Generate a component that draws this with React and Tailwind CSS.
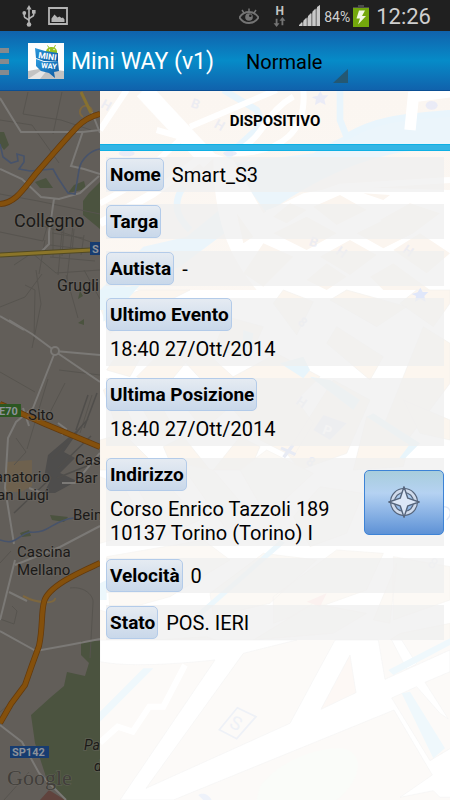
import { useState } from "react";

const fields = [
  { id: 1, label: "Nome", value: "Smart_S3" },
  { id: 2, label: "Targa", value: "" },
  { id: 3, label: "Autista", value: "-" },
  { id: 4, label: "Ultimo Evento", value: "18:40 27/Ott/2014", stacked: true },
  { id: 5, label: "Ultima Posizione", value: "18:40 27/Ott/2014", stacked: true },
  { id: 6, label: "Indirizzo", value: "Corso Enrico Tazzoli 189\n10137 Torino (Torino) I", stacked: true, locate: true },
  { id: 7, label: "Velocità", value: "0" },
  { id: 8, label: "Stato", value: "POS. IERI" },
];

const UsbIcon = () => (
  <svg className="w-[14px] h-[22px]" viewBox="0 0 14 22" fill="none" stroke="#b4b4b4" strokeWidth="1.6">
    <path d="M7 3v16M2.3 8v3.5c0 2 4.7 2.2 4.7 4.5M11.7 7v3c0 2-4.7 2.2-4.7 4.5" />
    <path d="M7 0l2.6 4.4H4.4z" fill="#b4b4b4" stroke="none" />
    <circle cx="7" cy="19.5" r="2.3" fill="#b4b4b4" stroke="none" />
    <circle cx="2.3" cy="8" r="1.9" fill="#b4b4b4" stroke="none" />
    <path d="M10 5h3.6v3.6H10z" fill="#b4b4b4" stroke="none" />
  </svg>
);

const PictureIcon = () => (
  <svg className="w-[20px] h-[18px]" viewBox="0 0 20 18">
    <path d="M1 1h18v16H1z" fill="none" stroke="#b4b4b4" strokeWidth="1.8" />
    <path d="M3.500 15v-3.500l3-4 3 3 2-1 2 1.500 1.500-.5 1.500 2V15z" fill="#b4b4b4" />
  </svg>
);

const EyeIcon = () => (
  <svg className="w-[20px] h-[16px]" viewBox="0 0 20 16" fill="none" stroke="#747474" strokeWidth="1.8">
    <path d="M.5 9.500C3 5.500 6.500 4 10 4s7 1.500 9.500 5.500C17 13.500 13.500 15 10 15S3 13.500.5 9.500z" />
    <path d="M10 4V.5M5 5L3 2M15 5l2-3" strokeWidth="1.500" />
    <circle cx="10" cy="9" r="3.800" fill="#747474" stroke="none" />
    <circle cx="11.300" cy="7.800" r="1.300" fill="#202020" stroke="none" />
  </svg>
);

const DataIcon = () => (
  <div className="flex w-[13px] flex-col items-center">
    <span className="text-[12px] leading-[12px] font-bold text-[#c4c4c4]">H</span>
    <svg className="w-[13px] h-[10px]" viewBox="0 0 13 11" fill="#747474">
      <path d="M2.300 2h2v5h2.200l-3.200 4L0 7h2.300zM8.700 9h2V4H13L9.700 0 6.500 4h2.200z" />
    </svg>
  </div>
);

const SignalIcon = () => (
  <svg className="w-[21px] h-[21px]" viewBox="0 0 21 21" fill="#c9c9c9">
    <path d="M0 21v-1l3-3v4zM4.500 21v-5.500l3-3V21zM9 21V11l3-3v13zM13.500 21V6.500l3-3V21zM18 21V2l3-2v21z" />
    <path d="M0 21L21 0v21z" fillOpacity=".6" />
  </svg>
);

const BatteryIcon = () => (
  <svg className="w-[16px] h-[22px]" viewBox="0 0 16 22">
    <path d="M5 0h6v2h5v2H0V2h5z" fill="#4b4b4b" />
    <path d="M0 3h16v19H0z" fill="#74a80c" />
    <path d="M6 5.500h6L9 11h4l-8 8.500 2-6H3.500z" fill="#f1f6e4" />
  </svg>
);

const StatusBar = () => (
  <header className="flex h-[31px] items-center bg-[#202020] pl-[22px] pr-[19px]">
    <UsbIcon />
    <div className="ml-[12px]">
      <PictureIcon />
    </div>
    <div className="ml-auto flex items-center">
      <EyeIcon />
      <div className="ml-[14px]">
        <DataIcon />
      </div>
      <div className="ml-[13px]">
        <SignalIcon />
      </div>
      <span className="ml-[4px] pt-[3px] text-[14px] text-[#d0d0d0]">84%</span>
      <div className="ml-[3px]">
        <BatteryIcon />
      </div>
      <span className="ml-[7px] pt-[3px] text-[22px] leading-[28px] text-[#cfcfcf]">12:26</span>
    </div>
  </header>
);

const AppLogo = () => (
  <svg className="w-[36px] h-[36px]" viewBox="0 0 36 36">
    <defs>
      <linearGradient id="bubble" x1="0" y1="0" x2="1" y2="1">
        <stop offset="0" stopColor="#2b9ade" />
        <stop offset="1" stopColor="#0a569e" />
      </linearGradient>
    </defs>
    <path d="M0 0h36v36H0z" fill="#fdfdfd" />
    <path d="M0 28l16-3 20 3v8H0z" fill="#c3c3c3" />
    <path d="M0 36l14-9 6-1-8 10z" fill="#e6e6e6" />
    <path d="M18 9c0-6 10-7 11-1v4H18z" fill="#95c11f" />
    <path d="M19.500 2.500l2 3M27.500 2l-1.500 3" stroke="#95c11f" />
    <circle cx="21.500" cy="7" r=".7" fill="#fff" />
    <circle cx="26" cy="6.500" r=".7" fill="#fff" />
    <path d="M7 5l10 3 13 2v8l-14 0-8-3z" fill="url(#bubble)" />
    <path d="M8 16l8 3 14-1 1 10-5 1 1 6-6-5-8-2-5-5z" fill="url(#bubble)" />
    <text x="10" y="15" transform="rotate(8 10 15)" fontSize="8.500" fontWeight="700" fill="#fff">MINI</text>
    <text x="13" y="25" transform="rotate(4 13 25)" fontSize="7.500" fontWeight="700" fill="#fff">WAY</text>
  </svg>
);

const ActionBar = () => {
  const [mode, setMode] = useState("Normale");

  return (
    <div className="flex h-[60px] items-center border-b border-[#0a4f94] bg-linear-to-b from-[#1062ac] via-[#068bc8] to-[#1062ac]">
      <button aria-label="Menu" className="flex w-[9px] flex-col gap-[6px] pt-[2px]">
        <span className="h-[5px] w-full bg-[#868a8e]" />
        <span className="h-[5px] w-full bg-[#868a8e]" />
        <span className="h-[5px] w-full bg-[#868a8e]" />
      </button>
      <div className="ml-[19px]">
        <AppLogo />
      </div>
      <h1 className="ml-[7px] pt-[4px] text-[23px] text-white">Mini WAY (v1)</h1>
      <div className="relative ml-[24px] h-[44px] w-[110px]">
        <select
          aria-label="Tipo mappa"
          value={mode}
          onChange={(e) => setMode(e.target.value)}
          className="h-full w-full appearance-none bg-transparent pt-[3px] pl-[8px] text-[20px] text-black outline-none"
        >
          <option>Normale</option>
          <option>Satellite</option>
        </select>
        <svg className="pointer-events-none absolute right-0 bottom-0 w-[15px] h-[14px]" viewBox="0 0 15 14">
          <path d="M15 0v14H0z" fill="#245873" />
        </svg>
      </div>
    </div>
  );
};

// city map under the drawer, dimmed
const StreetMap = () => (
  <svg className="absolute inset-0 h-full w-full" viewBox="0 91 100 709" preserveAspectRatio="xMinYMin slice" fill="none">
    <path d="M0 91h100v709H0z" fill="#625e59" />
    {/* parks */}
    <g fill="#4b533f">
      <path d="M83 201l6-8 11-11v47l-17-14zM0 132l4 0 5 13-5 5-4-5zM35 182l11-4 7 10-13 0zM74 185l10-4 2 8-18 4zM80 291l3 5-5 3zM78 323l6-4v6z" />
      <path d="M81 641l19 0v159H64l-17-20-12-37-4-28 20-18 13-11 3-14 18 4 4-13-8-8z" />
      <path d="M50 515l18 2-4 5-12-2zM20 533l9-3 2 6-9 1z" />
    </g>
    <path d="M6 462l26-2v26l-11 6H5z" fill="#6e614e" />
    <path d="M48 455l34-29-18 26 11 6-15 15 17 8-22 12H44l6-12-6-3z" fill="#4e4d4c" />
    <path d="M40 800l9-10 16 10z" fill="#60433d" />
    {/* small streets */}
    <g stroke="#57544f">
      <path d="M0 120l32 5 27 38M28 92l-5 22 38 6 30 10M62 92l-9 42M0 194l38 7 62 13M0 232l43 9 10-35M34 223l66 22M14 265l18-12 24 20 44-3M36 270l5 34-9 44M0 307l25-10 17-23M25 285l10 5-1 50M0 372l35 20M48 379l-21 70M65 383l-22 43M92 395l-12 38M45 240l-6 34M63 221l-5 54M73 225l-6 54M52 233l31 5M50 245l40 5M50 257l45 4" />
      <path d="M0 563l11-12M12 606l5 5-3 13-14-5M70 588c15-2 24 8 23 15l-3 55M0 712l14-12M29 772l-25 28M66 275l12 43M84 270l16 29M59 370l41 5M16 438l10 14-12 13" />
      <path d="M52 459l36-40M58 468l33-32M57 478l30-12M76 430l12-35M84 428l13-35M14 513l38-36" stroke="#504e4b" strokeWidth="1.500" />
      <path d="M53 224v33M64 226l-2 30M74 229l-2 24M84 235l-3 20" />
    </g>
    {/* secondary roads */}
    <g stroke="#7b7976" strokeWidth="2">
      <path d="M0 98l11 18 10 16 62 0 17-2M83 131l-12 35 13 3 16 5M0 169l22 10 19 18 18 2 21-6 19-17M54 199l-5 33v12l-8 8M91 110l9 23M0 316l24 14" />
      <path d="M9 320l23 14 23 17 45 4M56 352l44 30M55 352l-22 56-17 14-8 16-3 50 9 56M23 408l6 18M58 423l8 6-4 6M62 483h13l25-30M42 493l-13-5" />
      <path d="M100 526L60 547 15 565M15 560l-15 60M9 592l18 9M0 631l36 20 33-6 31-6M0 725l22 17 17 31 27 27" />
      <circle cx="55" cy="351" r="4" fill="#625e59" />
    </g>
    <path d="M0 144l3 13 8 6 7-2-1-7 7 2 0 6-5 7 11 2 23-2 5 9 10 15 7 1 4-24c2-12 13-20 21-21M0 540c17 6 17-5 30-8 20 2 22-12 44-14" stroke="#47536b" strokeWidth="1.600" />
    <path d="M23 596c15 8 33 8 32 2M83 117a6 6 0 1 1 9-5" stroke="#7d673f" strokeWidth="2" />
    <path d="M81 92l10 21" stroke="#877130" strokeWidth="3" />
    <path d="M0 255l91-5" stroke="#514923" strokeWidth="5" />
    <path d="M0 255l91-5" stroke="#8b7529" strokeWidth="3" />
    <g stroke="#643a0c" strokeWidth="6">
      <path d="M0 204c17-1 25-18 39-34s25-29 38-43c8-8 15-11 23-13" />
      <path d="M0 404l45 20 55 23" />
      <path d="M0 723l11-19 14-19 7-20 7-19c4-19 2-33 5-44 4-17 41-32 56-39" />
    </g>
    <g stroke="#84500c" strokeWidth="4.500">
      <path d="M0 204c17-1 25-18 39-34s25-29 38-43c8-8 15-11 23-13" />
      <path d="M0 404l45 20 55 23" />
      <path d="M0 723l11-19 14-19 7-20 7-19c4-19 2-33 5-44 4-17 41-32 56-39" />
    </g>
    <path d="M90 242h10v13H90z" fill="#173c70" />
    <path d="M0 404h21v13H0z" fill="#2c5722" />
    <path d="M10 746h39v12H10z" fill="#173c70" />
    <g fontSize="11" fontWeight="700" fill="#8d9299">
      <text x="92" y="253">S</text>
      <text x="-1" y="415">E70</text>
      <text x="12" y="756">SP142</text>
    </g>
    <g fill="#1b1a18" stroke="#716d67" strokeWidth="2" paintOrder="stroke" strokeOpacity=".4">
      <text x="14" y="227" fontSize="18">Collegno</text>
      <g fontSize="15">
        <text x="57" y="291" fontSize="16">Grugli</text>
        <text x="28" y="420">Sito</text>
        <text x="50" y="482" textAnchor="end">anatorio</text>
        <text x="49" y="500" textAnchor="end">an Luigi</text>
        <text x="75" y="465">Cas</text>
        <text x="75" y="483">Bar</text>
        <text x="73" y="520">Bein</text>
        <text x="17" y="557">Cascina</text>
        <text x="17" y="575">Mellano</text>
        <text x="84" y="750" fontSize="14" fontStyle="italic">Pa</text>
        <text x="94" y="771" fontSize="14" fontStyle="italic">d</text>
      </g>
    </g>
    <text x="7" y="785" fontSize="22" fontFamily="Liberation Serif, serif" fill="#423f3b" stroke="#77736d" strokeOpacity=".5" strokeWidth="1" paintOrder="stroke">Google</text>
  </svg>
);

// faint street pattern behind the device details
const DrawerPattern = () => (
  <svg className="absolute inset-0 h-full w-full" viewBox="100 91 350 709" preserveAspectRatio="xMinYMin slice" fill="none">
    <defs>
      <linearGradient id="paper" x1="0" y1="0" x2="0" y2="1">
        <stop offset="0" stopColor="#fbf6f1" />
        <stop offset=".6" stopColor="#fdf9f5" />
        <stop offset="1" stopColor="#fcfcfa" />
      </linearGradient>
    </defs>
    <path d="M100 91h350v709H100z" fill="url(#paper)" />
    <g transform="translate(100 90) scale(.33333)">
      <path d="M390 220L640 190C760 110 900 80 1050 60v110C850 180 700 230 500 370zM0 600L130 470l130-30 110-90 30 60-160 120-190 70z" fill="#ebf5fb" />
      <path d="M720 0v90l20 50c100-60 200-60 310-70M370 0l100 60 20 40-110 100M250 290c-40 60-10 100 20 130" stroke="#e9f5fc" strokeWidth="20" />
      <g stroke="#fff" strokeWidth="18">
        <path d="M0 120L80 0M270 110L530 0M610 0c10 120-60 190-210 190M400 190c100-50 90-120 180-170M250 140L90 290 0 340M240 140l-70-20" />
        <path d="M500 370L720 290 1050 270M470 480L760 310 1050 380" />
      </g>
      <path d="M930 120l10-100 110-15" stroke="#fff" strokeWidth="34" />
      <path d="M130 0l200 215" stroke="#fff" strokeWidth="54" />
      <path d="M0 400l160-90 160-120" stroke="#fff" strokeWidth="24" />
      <path d="M340 190l60 20 90 160 120-60 110-20 330 10v300H470C390 500 340 400 340 190z" fill="#fff" />
      <g fill="#fbf5ef">
        <path d="M410 370l50 70-30 20zM520 380l50-40 50 20-60 40zM640 350l80-35 80 45-90 45zM840 390l90-50 90 30-80 60zM520 430l100-50 90 50-90 50zM770 430l80-40 90 40-90 45zM660 500l90-50 80 45-80 60zM880 480l80-50 90 60-70 60zM430 550l60-90 90 40-90 90zM620 570l60-50 60 40-60 40zM810 560l70-40 110 80H850zM790 310l80 5-20 15z" />
      </g>
      <g fill="#e6e9f7" fillOpacity=".8">
        <path d="M635 22l18-5 8-14 7 13 17 0-12 12 4 17-16-8-16 8 3-17z" />
        <ellipse cx="995" cy="46" rx="18" ry="13" />
        <ellipse cx="80" cy="190" rx="24" ry="9" />
        <ellipse cx="390" cy="190" rx="20" ry="8" />
      </g>
      <g fontSize="40" fontWeight="700" fill="#e3e6f3" fillOpacity=".6">
        <text transform="translate(270 50) rotate(20)">B</text>
        <text transform="translate(340 110) rotate(30)">H</text>
        <text transform="translate(625 465) rotate(20)">B</text>
        <text transform="translate(705 490) rotate(35)">H</text>
        <text transform="translate(905 485) rotate(35)">H</text>
        <text transform="translate(0 50) rotate(30)">H</text>
      </g>
    </g>
    <g transform="translate(100 290) scale(.33333)">
      <path d="M0 0h1050v1050H0z" fill="#fff" />
      <g fill="#fcf6ef" stroke="#f3f1ef" strokeWidth="2">
        <path d="M0 50l120-50h150l-80 40-160 90zM380 80l110 30-40 90-110-20zM520 40l30-40 90 35-50 100zM680 160l30-50 140 90-40 70zM690 30l50-30 180 50-90 60zM900 40l50-40h100v40l-50 70zM970 110l80 50v120l-120 160-80-30zM20 240l60-90 60 20-50 90zM110 260l110-110 60 40-90 110zM240 200l60-30 110 100-50 60z" />
        <path d="M10 300l30-20 70 140-50 20zM90 290l50-20 90 160-50 20zM240 330l80-50 60 80-70 60zM400 260l130-70 130 70-70 70 50 70-60 100-100-50-80-90zM700 270l110 60-70 160-140 50-40-50zM800 380l130 70-20 80-150 10zM0 450l70-20 110 110H0zM420 440l60 30-30 70H340zM910 330l140 60v60l-90-20zM190 470l60-30 80 100H220z" />
      </g>
      <path d="M10 0l110-15-70 80-40 30zM430 120l30 10-10 80-25-10zM540 220l70-20 20 40-20 25zM630 260l60 10 90 60-20 30zM800 380l20-10 140 90-50 50-12-5 30-40zM0 0h15v60H0z" fill="#e8f5fb" />
      <path d="M935 12l18-5 8-14 7 13 17 0-12 12 4 17-16-8-16 8 3-17z" fill="#e0e7fa" />
      <g fill="#e8ebf4" fontSize="40" fontWeight="700">
        <path d="M670 375l70 25-50 50-50-30z" />
        <text transform="translate(665 430) rotate(20)" fill="#fff">P</text>
        <path d="M545 470l18 8 12-16 8 6-10 14 16 8-5 8-17-8-12 15-8-6 10-14-16-7z" />
        <text transform="translate(590 100) rotate(40)">8</text>
        <text transform="translate(585 340) rotate(35)">H</text>
        <text transform="translate(615 520) rotate(35)">8</text>
      </g>
    </g>
    <g transform="translate(100 450) scale(.33333)">
      <path d="M0 70h1050v530H0z" fill="#fff" />
      <g fill="#fcf9f5" stroke="#f6f4f2" strokeWidth="2">
        <path d="M0 80l70 30 60 100-60 50-70 20zM90 70l90 10 120 130-110 50zM240 40l100 20 110 130-70 50zM420 60l80-60 140 70-140 130zM580 200l80-90 130 20-50 120-110 40zM20 320l290-50 80 60-180 110-180 50zM330 430l160-120 160 20-140 130-170 40zM520 440l190-140 140 10-50 110-280 100zM880 320l170 30v100l-170 60zM0 480l60 20 100 70 160-10 110 40H0zM820 510l70-170-20 180z" />
        <path d="M460 570l180-110 160 30-100 60zM840 590l60-40 150-30v80z" />
      </g>
      <path d="M290 490l150-130 100-90 15 8-250 220zM0 400l20-10v60H0z" fill="#ecf7fc" />
      <path d="M620 455l60-25-20 40z" fill="#fbf1ef" />
      <text transform="translate(980 345) rotate(35)" fontSize="44" fill="#eff1f7">8</text>
      <path d="M1030 170c20 0 30 20 10 40" stroke="#e5e9f5" strokeWidth="4" />
    </g>
    <g transform="translate(100 640) scale(.33333)">
      <path d="M0 0h1050v480H0z" fill="#fcfaf8" />
      <path d="M480 440c40-60 150-120 250-115 70 20 50 100-20 155H470z" fill="#fafcf9" />
      <g stroke="#f4f4f5" strokeWidth="2" fill="#fff">
        <path d="M0 0h590L430 40 138 445 570 250 705 0h130l20 118L1050 30v65L975 127l70 110-25-17-70-80-75 34 115 188 150-90v50l-30 10 30 60v80h-120l-20-20-100 20 97-67-115-195L220 480H60L345 60C200 75 80 80 0 65z" />
        <path d="M750 45l18 113-105 50z" fill="#fdf8f5" />
        <path d="M875 0h30l45 72-30 15z" />
      </g>
      <path d="M255 75l-65 125h-42l-50 75-45-15L0 308" stroke="#fff" strokeWidth="18" />
      <path d="M130 85h30L0 245v-30zM905 160l25-5 105 170-35 30zM865 90l185-95v20L880 105z" fill="#eff8fc" />
      <path d="M412 203l56 27-58 66-52-27z" stroke="#eef1f7" strokeWidth="5" />
      <text transform="translate(385 260) rotate(25)" fontSize="56" fill="#eef1f7">S</text>
      <path d="M295 465c10-8 30-5 40 15h-25z" fill="#eef2fa" />
    </g>
  </svg>
);

const CompassIcon = () => (
  <svg className="w-[32px] h-[32px]" viewBox="0 0 32 32" stroke="#56657c" strokeLinejoin="round">
    <circle cx="16" cy="16" r="11.500" fill="none" strokeWidth="5" />
    <circle cx="16" cy="16" r="11.500" fill="none" stroke="#cfdaeb" strokeWidth="2.800" />
    <path d="M16 .8l3.800 11.400L31.200 16l-11.400 3.800L16 31.200l-3.800-11.400L.8 16l11.400-3.800z" fill="#dce7f7" strokeWidth="1.400" />
  </svg>
);

const Field = ({ label, value, stacked, locate }) => (
  <div
    className={`flex items-center justify-between bg-[#efefef]/75 ${stacked ? "min-h-[68px]" : "h-[35px]"}`}
  >
    <div className={stacked ? "self-start pb-px" : "flex items-center"}>
      <dt className="flex h-[33px] w-fit items-center rounded-[5px] border border-[#b3cbe9] bg-linear-to-b from-[#e5ebf2] to-[#c9d8ea] pt-[2px] pr-[2px] pl-[3px] text-[19px] font-bold text-black">
        {label}
      </dt>
      <dd className={`whitespace-pre-line text-[20px] leading-[24px] text-black ${stacked ? "mt-[6px] ml-[4px]" : "ml-[8px]"}`}>
        {value}
      </dd>
    </div>
    {locate && (
      <dd>
        <button
          aria-label="Mostra sulla mappa"
          className="flex h-[65px] w-[80px] items-center justify-center rounded-[5px] border border-[#3d83d6] bg-linear-to-b from-[#a8cddc] via-[#b5d2f2] via-35% to-[#5e92d6]"
        >
          <CompassIcon />
        </button>
      </dd>
    )}
  </div>
);

const App = () => {
  return (
    <div className="flex min-h-screen flex-col bg-white font-['Roboto',sans-serif]">
      <StatusBar />
      <ActionBar />
      <main className="flex grow">
        <div className="relative w-[100px] shrink-0 overflow-hidden bg-[#625e59]">
          <StreetMap />
        </div>
        <section className="relative grow overflow-hidden">
          <DrawerPattern />
          <div className="relative">
            <h2 className="flex h-[53px] items-center justify-center pt-[8px] text-[15px] font-bold text-black">
              DISPOSITIVO
            </h2>
            <div className="h-[7px] border-y border-[#0fb0e4] bg-[#33b5e5]" />
            <dl className="flex flex-col gap-[12px] py-[6px] px-[6px]">
              {fields.map((item) => (
                <Field key={item.id} {...item} />
              ))}
            </dl>
          </div>
        </section>
      </main>
    </div>
  );
};

export default App;
